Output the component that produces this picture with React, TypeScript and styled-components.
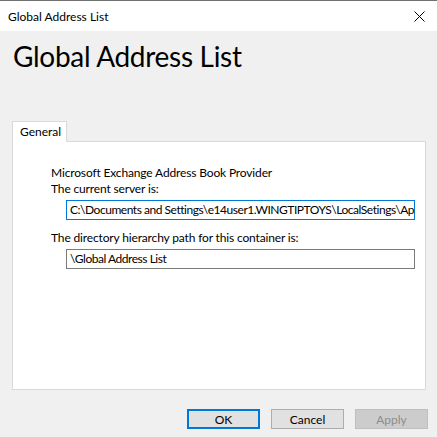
import React from "react";
import styled, { createGlobalStyle } from "styled-components";

const Global = createGlobalStyle`
  html, body { margin: 0; padding: 0; background: #f0f0f0; }
  body { font-family: Lato, "Open Sans", sans-serif; font-size: 12px; color: #000; }
`;

const Window = styled.div`
  width: 437px;
  height: 437px;
  display: flex;
  flex-direction: column;
  background: #f0f0f0;
  overflow: hidden;
`;

const TitleBar = styled.div`
  height: 30px;
  border-top: 1px solid #707070;
  background: #fff;
  display: flex;
  align-items: center;
  justify-content: space-between;
  padding: 0 6px 0 8px;
  font-size: 12px;
`;

const CloseButton = styled.div`
  width: 24px;
  height: 24px;
  display: flex;
  align-items: center;
  justify-content: center;
`;

const Heading = styled.h1`
  margin: 6px 0 0 13px;
  font-size: 28px;
  font-weight: 400;
  line-height: 38px;
  letter-spacing: -0.3px;
`;

const TabArea = styled.div`
  margin: 46px 11px 0 12px;
  display: flex;
  flex-direction: column;
`;

const TabStrip = styled.div`
  display: flex;
  height: 20px;
`;

const Tab = styled.div`
  width: 55px;
  height: 21px;
  box-sizing: border-box;
  background: #fff;
  border: 1px solid #d9d9d9;
  border-bottom: none;
  padding-left: 7px;
  line-height: 19px;
  white-space: nowrap;
  position: relative;
  z-index: 1;
`;

const Panel = styled.div`
  height: 249px;
  box-sizing: border-box;
  background: #fff;
  border: 1px solid #d9d9d9;
  padding: 23px 10px 0 38px;
  display: flex;
  flex-direction: column;
`;

const Label = styled.div<{ $gap?: number }>`
  line-height: 16px;
  margin-top: ${(p) => p.$gap ?? 0}px;
  white-space: nowrap;
  letter-spacing: -0.15px;
`;

const Field = styled.div<{ $focused?: boolean }>`
  margin: 3px 0 0 15px;
  height: 20px;
  box-sizing: border-box;
  border: 1px solid ${(p) => (p.$focused ? "#0078d7" : "#7a7a7a")};
  padding-left: 3px;
  line-height: 18px;
  white-space: nowrap;
  overflow: hidden;
  letter-spacing: -0.47px;
`;

const Footer = styled.div`
  display: flex;
  justify-content: flex-end;
  gap: 11px;
  padding: 19px 9px 0 0;
`;

const Button = styled.div<{ $variant?: "default" | "normal" | "disabled" }>`
  width: 73px;
  height: 20px;
  box-sizing: border-box;
  display: flex;
  align-items: center;
  justify-content: center;
  background: ${(p) => (p.$variant === "disabled" ? "#cccccc" : "#e1e1e1")};
  border: ${(p) =>
    p.$variant === "default"
      ? "2px solid #0078d7"
      : p.$variant === "disabled"
      ? "1px solid #bfbfbf"
      : "1px solid #adadad"};
  color: ${(p) => (p.$variant === "disabled" ? "#8c8c8c" : "#000")};
`;

export default function App() {
  return (
    <>
      <Global />
      <Window>
        <TitleBar>
          <span>Global Address List</span>
          <CloseButton>
            <svg width="11" height="11" viewBox="0 0 11 11">
              <path d="M0.5 0.5 L10.5 10.5 M10.5 0.5 L0.5 10.5" stroke="#000" strokeWidth="1" />
            </svg>
          </CloseButton>
        </TitleBar>
        <Heading>Global Address List</Heading>
        <TabArea>
          <TabStrip>
            <Tab>General</Tab>
          </TabStrip>
          <Panel>
            <Label>Microsoft Exchange Address Book Provider</Label>
            <Label>The current server is:</Label>
            <Field $focused>C:\Documents and Settings\e14user1.WINGTIPTOYS\LocalSetings\Ap</Field>
            <Label $gap={10}>The directory hierarchy path for this container is:</Label>
            <Field>\Global Address List</Field>
          </Panel>
        </TabArea>
        <Footer>
          <Button $variant="default">OK</Button>
          <Button $variant="normal">Cancel</Button>
          <Button $variant="disabled">Apply</Button>
        </Footer>
      </Window>
    </>
  );
}
